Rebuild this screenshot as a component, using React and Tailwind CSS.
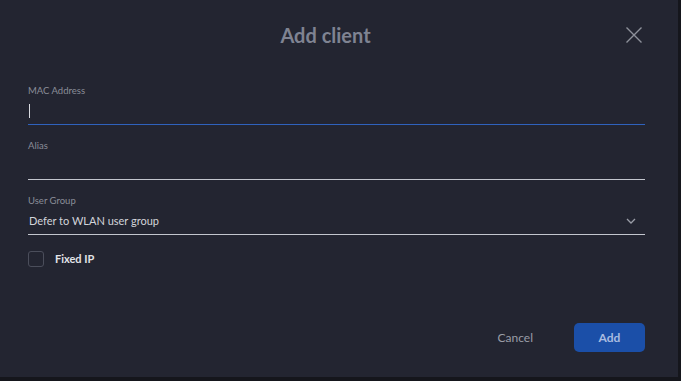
import React, { useState } from 'react';

export default function App(){
  const [fixed, setFixed] = useState(false);

  return (
    <div className="w-[681px] h-[381px] bg-[#15161c] overflow-hidden" style={{ fontFamily: 'Lato, "Open Sans", sans-serif' }}>
      <div className="w-[678px] h-[377px] bg-[#232531] flex flex-col">
        {/* header */}
        <div className="flex items-center pt-[22px] pr-[35px] h-[48px]">
          <div className="flex-1 pl-[26px] text-center text-[20px] font-bold text-[#7f8392] leading-none">Add client</div>
          <button className="w-[18px] h-[18px] flex items-center justify-center text-[#8e919b]">
            <svg width="18" height="18" viewBox="0 0 18 18" fill="none" stroke="currentColor" strokeWidth="1.4">
              <path d="M1.5 1.5 L16.5 16.5 M16.5 1.5 L1.5 16.5" />
            </svg>
          </button>
        </div>

        <div className="pl-[28px] pr-[33px] pt-[36px] flex flex-col">
          <Field label="MAC Address" focused>
            <span className="block w-px h-[14px] bg-[#d8dae0]" />
          </Field>
          <div className="h-[14px]" />
          <Field label="Alias" />
          <div className="h-[14px]" />
          <Field label="User Group">
            <div className="flex items-center justify-between w-full pr-[9px]">
              <span className="text-[11px] text-[#d2d4da]">Defer to WLAN user group</span>
              <svg width="10" height="6" viewBox="0 0 10 6" fill="none" stroke="#9a9da7" strokeWidth="1.3">
                <path d="M1 1 L5 5 L9 1" />
              </svg>
            </div>
          </Field>

          <label className="mt-[16px] flex items-center gap-[11px] cursor-pointer w-fit">
            <input type="checkbox" className="hidden" checked={fixed} onChange={() => setFixed(!fixed)} />
            <span className={`w-[16px] h-[16px] rounded-[3px] border ${fixed ? 'bg-[#1b4fa8] border-[#1b4fa8]' : 'border-[#4b4e5b]'}`} />
            <span className="text-[11px] font-bold text-[#e1e3e8]">Fixed IP</span>
          </label>
        </div>

        {/* footer */}
        <div className="mt-auto mb-[25px] pr-[33px] flex justify-end items-center gap-[37px]">
          <button className="h-[29px] px-[4px] text-[12px] text-[#9a9da7]">Cancel</button>
          <button className="w-[71px] h-[29px] rounded-[5px] bg-[#1b4fa8] text-[12px] font-bold text-[#a9bce0]">Add</button>
        </div>
      </div>
    </div>
  );
}

function Field({ label, focused, children }){
  return (
    <div className="flex flex-col">
      <div className="h-[14px] text-[9.5px] leading-[14px] text-[#8a8d98]">{label}</div>
      <div className={`h-[27px] flex items-center pl-[1px] border-b ${focused ? 'border-[#2f62bd]' : 'border-[#c3c6ce]'}`}>
        {children}
      </div>
    </div>
  );
}
